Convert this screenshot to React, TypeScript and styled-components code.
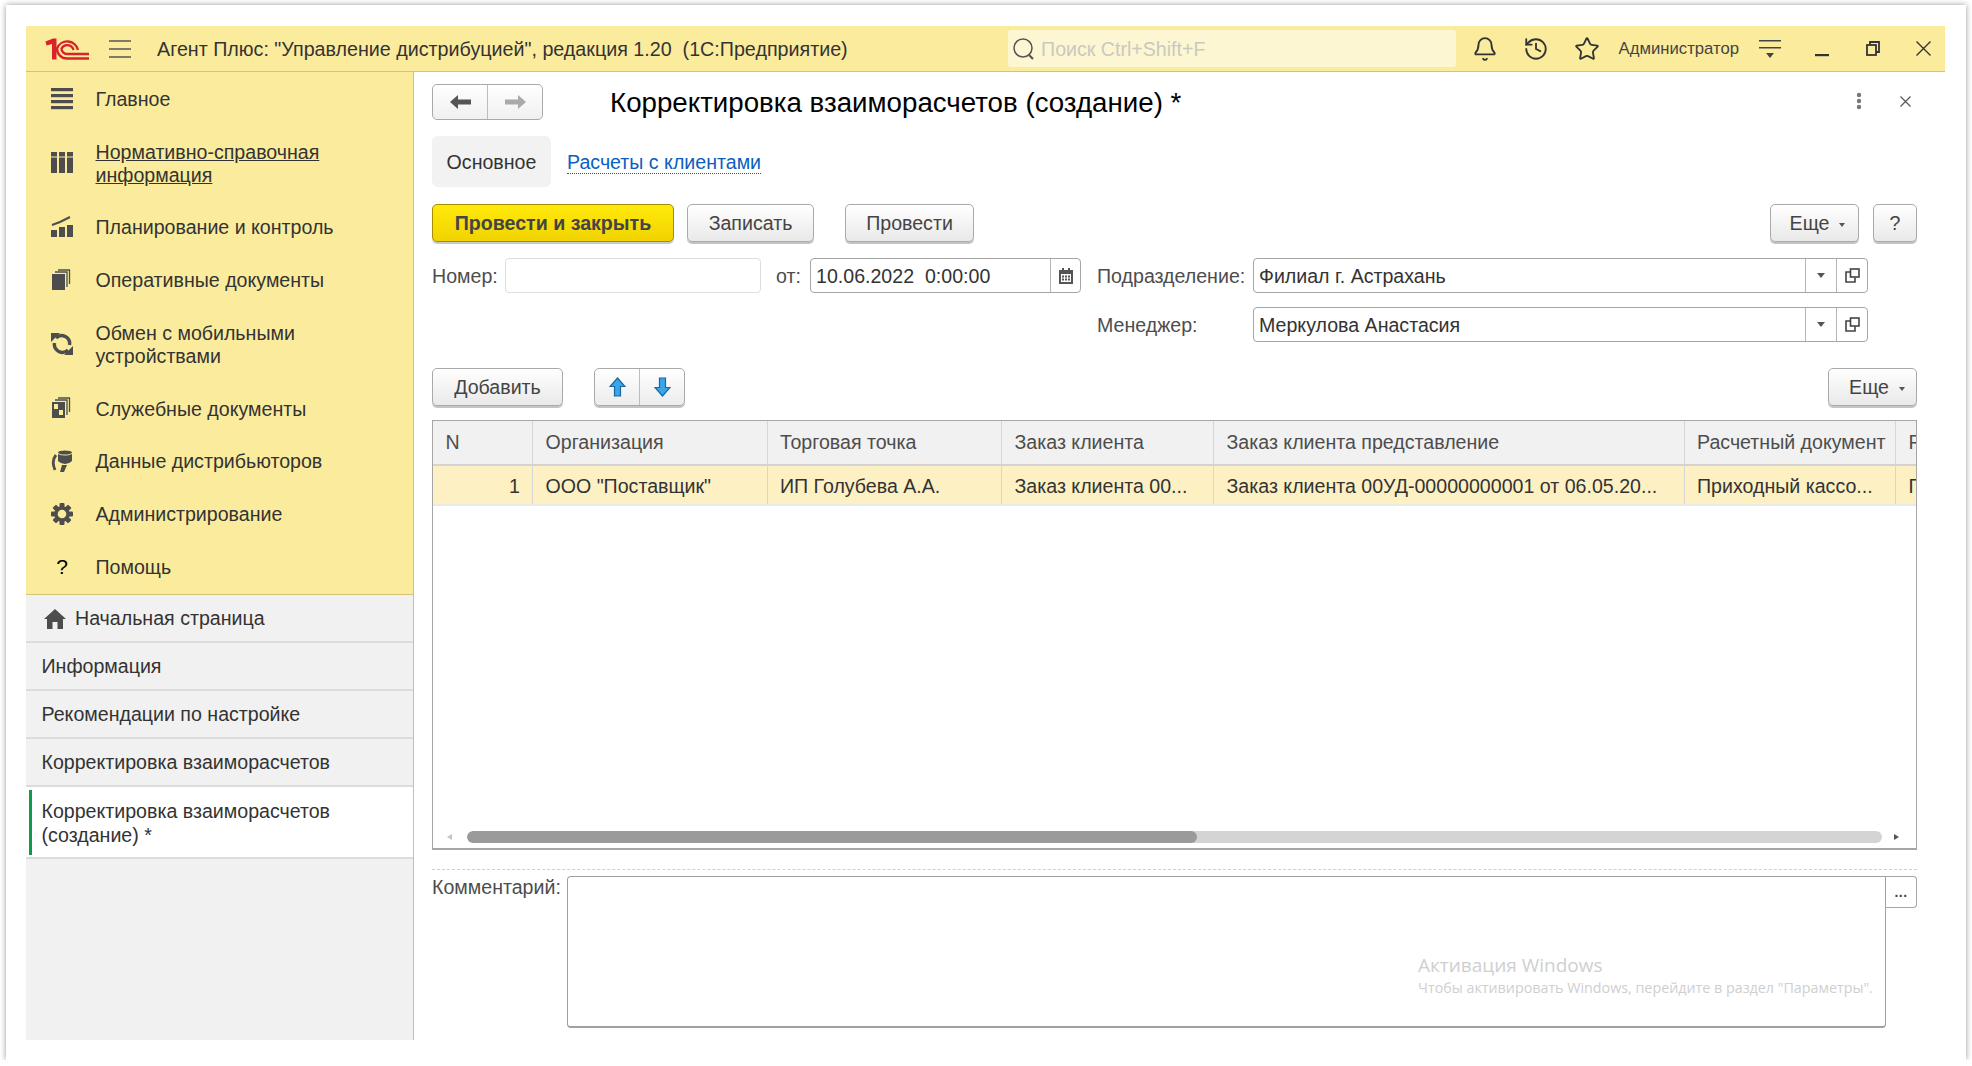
import React from 'react'
import styled, { createGlobalStyle } from 'styled-components'
import { Bell, History, Star } from 'lucide-react'

const GlobalStyle = createGlobalStyle`
  html, body {
    margin: 0;
    padding: 0;
    background: #fff;
    font-family: "Liberation Sans", Arial, sans-serif;
    font-size: 19.6px;
    color: #333;
  }
  * { box-sizing: border-box; }
`

const Frame = styled.div`
  width: 1960px;
  height: 1055px;
  margin: 5px 0 0 6px;
  padding: 21px 21px 20px 20px;
  background: #fff;
  box-shadow: 0 0 6px rgba(0, 0, 0, 0.4);
`

const Screen = styled.div`
  position: relative;
  display: flex;
  flex-direction: column;
  width: 1919px;
  height: 1014px;
`

const TopBar = styled.header`
  display: flex;
  align-items: center;
  flex: 0 0 46px;
  padding: 0 14px 0 19px;
  background: #fbec9d;
  border-bottom: 1px solid #d4c275;
`

const Logo = styled.svg`
  width: 44px;
  height: 22px;
  flex: none;
`

const MenuGlyph = styled.svg`
  width: 22px;
  height: 18px;
  margin-left: 20px;
  flex: none;
`

const AppTitle = styled.div`
  margin-left: 26px;
  padding-top: 1px;
  font-size: 19.7px;
  white-space: pre;
  color: #333;
`

const Search = styled.div`
  display: flex;
  align-items: center;
  width: 448px;
  height: 37px;
  margin-left: auto;
  padding: 1px 0 0 4px;
  background: #fdf6d2;
  border-radius: 3px;
  color: #c9c9c0;
`

const SearchIcon = styled.svg`
  width: 24px;
  height: 24px;
  margin-right: 5px;
  flex: none;
`

const TopIcon = styled.span<{ $ml: number }>`
  display: flex;
  margin-left: ${(p) => p.$ml}px;
  color: #333;
`

const UserName = styled.div`
  margin-left: 18.5px;
  font-size: 16.7px;
  color: #444;
`

const Body = styled.div`
  display: flex;
  flex: 1;
  min-height: 0;
`

const Side = styled.aside`
  display: flex;
  flex-direction: column;
  flex: 0 0 388px;
  background: #f1f1f1;
  border-right: 1px solid #d4c275;
`

const SideMenu = styled.nav`
  background: #fbec9d;
  border-bottom: 1px solid #d4c275;
  height: 523px;
`

const MenuItem = styled.div`
  display: flex;
  align-items: center;
  padding: 15px 12px 14px 25px;
  line-height: 22.8px;
  color: #333;
`

const MenuIcon = styled.span`
  display: flex;
  justify-content: center;
  flex: 0 0 22px;
  margin-right: 22.5px;
`

const MenuText = styled.span<{ $link?: boolean }>`
  padding-top: 1px;
  text-decoration: ${(p) => (p.$link ? 'underline' : 'none')};
`

const HelpMark = styled.span`
  font-size: 21px;
  line-height: 22px;
  color: #000;
`

const OpenItem = styled.div`
  display: flex;
  align-items: center;
  height: 48px;
  padding: 1px 0 0 15.5px;
  border-bottom: 2px solid #dcdcdc;
  color: #333;
`

const HomeIcon = styled.svg`
  width: 22px;
  height: 20px;
  margin-left: 2px;
  margin-right: 9.5px;
`

const ActiveItem = styled.div`
  height: 72px;
  padding: 3px 0 3px 3px;
  background: #fff;
  border-bottom: 2px solid #dcdcdc;
`

const ActiveInner = styled.div`
  height: 65px;
  padding-top: 8.5px;
  padding-left: 9.5px;
  border-left: 3px solid #0f9a4c;
  line-height: 24px;
  color: #333;
`

const Main = styled.main`
  flex: 1;
  min-width: 0;
  padding: 12px 28px 0 18px;
  background: #fff;
`

const TitleRow = styled.div`
  display: flex;
  align-items: center;
  height: 36px;
`

const BtnGroup = styled.div<{ $w: number; $ml?: number }>`
  display: flex;
  width: ${(p) => p.$w}px;
  height: 38px;
  margin-left: ${(p) => p.$ml ?? 0}px;
  background: linear-gradient(#fff, #ececec);
  border: 1px solid #a9a9a9;
  border-radius: 5px;
  box-shadow: 0 2px 0 #c4c4c4;
  flex: none;
`

const NavGroup = styled(BtnGroup)`
  height: 36px;
  box-shadow: none;
  background: linear-gradient(#fff, #f0f0f0);
`

const GroupCell = styled.span`
  display: flex;
  align-items: center;
  justify-content: center;
  flex: 1;
  & + & { border-left: 1px solid #bdbdbd; }
`

const DocTitle = styled.h1`
  margin: 0 0 0 67px;
  padding-top: 1px;
  font-size: 27.7px;
  font-weight: 400;
  color: #000;
  white-space: nowrap;
`

const TitleActions = styled.div`
  display: flex;
  align-items: center;
  margin: 0 6px 2px auto;
  gap: 38px;
`

const Tabs = styled.div`
  display: flex;
  align-items: center;
  margin-top: 16px;
  height: 51px;
`

const TabActive = styled.div`
  display: flex;
  align-items: center;
  justify-content: center;
  width: 119px;
  height: 51px;
  padding-top: 1px;
  background: #f2f2f2;
  border-radius: 6px;
  color: #333;
`

const TabLink = styled.a`
  margin: 2px 0 0 16px;
  color: #0b5ec2;
  border-bottom: 1px dotted #0b5ec2;
  line-height: 21px;
`

const CommandBar = styled.div<{ $top: number }>`
  display: flex;
  align-items: flex-start;
  height: 40px;
  margin-top: ${(p) => p.$top}px;
`

const Button = styled.button<{ $w: number; $ml?: number; $pl?: number }>`
  display: flex;
  align-items: center;
  justify-content: center;
  width: ${(p) => p.$w}px;
  height: 38px;
  margin: 0 0 0 ${(p) => p.$ml ?? 0}px;
  padding: 0 0 0 ${(p) => p.$pl ?? 0}px;
  font: inherit;
  color: #444;
  background: linear-gradient(#fff, #e9e9e9);
  border: 1px solid #a9a9a9;
  border-radius: 5px;
  box-shadow: 0 2px 0 #c4c4c4;
  flex: none;
`

const PrimaryButton = styled(Button)`
  font-weight: 700;
  color: #444;
  background: linear-gradient(#ffe90a, #f0d300);
  border-color: #a58c00;
  box-shadow: 0 2px 0 #c9c9c9;
`

const MoreCaret = styled.span`
  width: 0;
  height: 0;
  margin-left: 10px;
  margin-top: 3px;
  border-left: 3.5px solid transparent;
  border-right: 3.5px solid transparent;
  border-top: 4px solid #555;
`

const PushRight = styled.div`
  margin-left: auto;
  display: flex;
`

const FormGrid = styled.div`
  display: grid;
  grid-template-columns: 73px 256px 49px 271px 172px 615px;
  grid-auto-rows: 35px;
  row-gap: 14px;
  margin-top: 14px;
`

const Label = styled.label<{ $col?: number; $pl?: number }>`
  display: flex;
  align-items: center;
  padding: 1px 0 0 ${(p) => p.$pl ?? 0}px;
  grid-column: ${(p) => p.$col ?? 'auto'};
  color: #4d4d4d;
`

const Field = styled.div<{ $faint?: boolean }>`
  display: flex;
  align-items: stretch;
  height: 35px;
  background: #fff;
  border: 1px solid ${(p) => (p.$faint ? '#dedede' : '#a6a6a6')};
  border-radius: 4px;
`

const FieldText = styled.span`
  display: flex;
  align-items: center;
  flex: 1;
  padding: 1px 0 0 5px;
  white-space: pre;
  color: #333;
`

const FieldBtn = styled.span<{ $w?: number }>`
  display: flex;
  align-items: center;
  justify-content: center;
  flex: 0 0 ${(p) => p.$w ?? 31}px;
  border-left: 1px solid #b5b5b5;
`

const Caret = styled.span`
  width: 0;
  height: 0;
  border-left: 4px solid transparent;
  border-right: 4px solid transparent;
  border-top: 5px solid #555;
`

const Grid = styled.div`
  display: flex;
  flex-direction: column;
  height: 430px;
  margin-top: 12px;
  background: #fff;
  border: 1px solid #a6a6a6;
  border-bottom-width: 2px;
  overflow: hidden;
`

const GridRow = styled.div<{ $head?: boolean }>`
  display: grid;
  grid-template-columns: 100px 234.5px 234.5px 212px 470.5px 211.5px 40px;
  height: ${(p) => (p.$head ? 45 : 40)}px;
  background: ${(p) => (p.$head ? '#f1f1f1' : '#fdf1c3')};
  border-bottom: 2px solid ${(p) => (p.$head ? '#d3d3d3' : '#e9e9e9')};
`

const Cell = styled.div<{ $right?: boolean }>`
  display: flex;
  align-items: center;
  justify-content: ${(p) => (p.$right ? 'flex-end' : 'flex-start')};
  padding: 2px 12px 0 12.5px;
  border-right: 1px solid #d6d6d6;
  white-space: nowrap;
  overflow: hidden;
  color: #333;
`

const HeadCell = styled(Cell)`
  padding-top: 0;
  color: #4d4d4d;
`

const GridSpace = styled.div`
  flex: 1;
`

const ScrollRow = styled.div`
  display: flex;
  align-items: center;
  height: 12px;
  margin-bottom: 5px;
  padding-left: 14px;
`

const ScrollTrack = styled.div`
  flex: 0 0 1415px;
  height: 12px;
  margin-left: 15px;
  margin-right: 12px;
  background: #d4d4d4;
  border-radius: 6px;
  overflow: hidden;
`

const ScrollThumb = styled.div`
  height: 100%;
  background: #9a9a9a;
  border-radius: 6px;
`

const ArrowLeft = styled.span`
  width: 0;
  height: 0;
  border-top: 3.5px solid transparent;
  border-bottom: 3.5px solid transparent;
  border-right: 5px solid #c4c4c4;
`

const ArrowRight = styled.span`
  width: 0;
  height: 0;
  border-top: 3.5px solid transparent;
  border-bottom: 3.5px solid transparent;
  border-left: 5px solid #555;
`

const Dashed = styled.div`
  margin-top: 19px;
  border-top: 1px dashed #d0d0d0;
`

const CommentRow = styled.div`
  display: flex;
  margin-top: 6px;
`

const CommentLabel = styled.label`
  flex: 0 0 135px;
  line-height: 22px;
  color: #4d4d4d;
`

const CommentBox = styled.div`
  flex: 1;
  height: 152px;
  background: #fff;
  border: 1px solid #a0a0a0;
  border-bottom-width: 2px;
  border-radius: 4px 0 4px 4px;
`

const CommentBtn = styled.div`
  display: flex;
  align-items: center;
  justify-content: center;
  flex: 0 0 31px;
  height: 32px;
  border: 1px solid #a6a6a6;
  border-left: 0;
  border-radius: 0 4px 4px 0;
  font-size: 14px;
  font-weight: 700;
  letter-spacing: 0.5px;
  color: #444;
`

const Watermark = styled.div`
  position: absolute;
  left: 1392px;
  top: 926px;
  font-family: "Open Sans", "Noto Sans", sans-serif;
  color: #cfcfcf;
  pointer-events: none;
`

const WatermarkTitle = styled.div`
  font-size: 19px;
  line-height: 27px;
`

const WatermarkText = styled.div`
  font-size: 14.3px;
  line-height: 18px;
  white-space: nowrap;
`

const DARK = '#4d4d4d'

const IconSvg = ({ children }: { children: React.ReactNode }) => (
  <svg width="22" height="22" viewBox="0 0 22 22" fill={DARK}>
    {children}
  </svg>
)

const menuIcons: Record<string, React.ReactNode> = {
  main: (
    <IconSvg>
      <rect x="0" y="0" width="22" height="3.2" />
      <rect x="0" y="6" width="22" height="3.2" />
      <rect x="0" y="12" width="22" height="3.2" />
      <rect x="0" y="18" width="22" height="3.2" />
    </IconSvg>
  ),
  ref: (
    <IconSvg>
      <rect x="0" y="0" width="6" height="21" />
      <rect x="8" y="0" width="6" height="21" />
      <rect x="16" y="0" width="6" height="21" />
      <rect x="0" y="4.5" width="22" height="1" fill="#fbec9d" />
    </IconSvg>
  ),
  plan: (
    <IconSvg>
      <rect x="0" y="14" width="6" height="7" />
      <rect x="8" y="11" width="6" height="10" />
      <rect x="16" y="9" width="6" height="12" />
      <path d="M1 9 L9 6 L19 1" fill="none" stroke={DARK} strokeWidth="2" />
    </IconSvg>
  ),
  docs: (
    <IconSvg>
      <rect x="1" y="5" width="13" height="16" />
      <path d="M4 3 H16 V18 M7 1 H18.500 V15" fill="none" stroke={DARK} strokeWidth="1.300" />
    </IconSvg>
  ),
  sync: (
    <IconSvg>
      <path d="M5 5 A8 8 0 0 1 18.500 12" fill="none" stroke={DARK} strokeWidth="3.400" />
      <path d="M17 17 A8 8 0 0 1 3.500 10" fill="none" stroke={DARK} strokeWidth="3.400" />
      <path d="M0 0 H9 L0 9 Z" />
      <path d="M22 22 H13 L22 13 Z" />
    </IconSvg>
  ),
  service: (
    <IconSvg>
      <rect x="1" y="5" width="13" height="16" />
      <rect x="3" y="7" width="4" height="5" fill="#fbec9d" />
      <rect x="8" y="13" width="4" height="5" fill="#fbec9d" />
      <path d="M4 3 H16 V18 M7 1 H18.500 V15" fill="none" stroke={DARK} strokeWidth="1.300" />
    </IconSvg>
  ),
  dist: (
    <IconSvg>
      <ellipse cx="14" cy="2.500" rx="7" ry="2" />
      <path d="M7 4 Q14 7 21 4 V11 Q18 14 14 14 Q10 14 7 11 Z" />
      <path d="M5 5 Q0 11 4 20" fill="none" stroke={DARK} strokeWidth="2.800" />
      <path d="M9 22 L11 15 H16 L13 22 Z" />
    </IconSvg>
  ),
  gear: (
    <IconSvg>
      {[0, 45, 90, 135, 180, 225, 270, 315].map((a) => (
        <rect key={a} x="8.500" y="0" width="5" height="5" rx="1" transform={`rotate(${a} 11 11)`} />
      ))}
      <circle cx="11" cy="11" r="6" fill="none" stroke={DARK} strokeWidth="3.400" />
    </IconSvg>
  ),
}

const menu = [
  { key: 'main', text: 'Главное' },
  { key: 'ref', text: 'Нормативно-справочная информация', link: true },
  { key: 'plan', text: 'Планирование и контроль' },
  { key: 'docs', text: 'Оперативные документы' },
  { key: 'sync', text: 'Обмен с мобильными устройствами' },
  { key: 'service', text: 'Служебные документы' },
  { key: 'dist', text: 'Данные дистрибьюторов' },
  { key: 'gear', text: 'Администрирование' },
]

const OpenIcon = () => (
  <svg width="15" height="15" viewBox="0 0 15 15" fill="none" stroke="#444" strokeWidth="1.600">
    <rect x="5.500" y="1" width="8.500" height="8" />
    <path d="M5 4 H1 V14 H10 V9.500" />
  </svg>
)

const UpArrow = ({ down }: { down?: boolean }) => (
  <svg width="17" height="20" viewBox="0 0 17 20" style={down ? { transform: 'rotate(180deg)' } : undefined}>
    <path d="M8.500 1 L16 9.500 H11.500 V19 H5.500 V9.500 H1 Z" fill="#3aa5ea" stroke="#17689f" strokeWidth="1.200" />
  </svg>
)

const NavArrow = ({ color, flip }: { color: string; flip?: boolean }) => (
  <svg width="21" height="14" viewBox="0 0 21 14" style={flip ? { transform: 'scaleX(-1)' } : undefined}>
    <path d="M0 7 L8 0 V4.500 H21 V9.500 H8 V14 Z" fill={color} />
  </svg>
)

export default function App() {
  return (
    <>
      <GlobalStyle />
      <Frame>
        <Screen>
          <TopBar>
            <Logo viewBox="0 0 44 22">
              <path d="M0.500 3.500 L8 0.500 H11.500 V21.500 H7 V6 L1.500 7.500 Z" fill="#d8232a" />
              <path d="M33 12 A11 11 0 0 0 12 10.500 A10 10 0 0 0 22 20.500 H44" fill="none" stroke="#d8232a" strokeWidth="2.400" />
              <path d="M28.500 12 A6.500 6.500 0 0 0 16.500 10.500 A5.500 5.500 0 0 0 22 16 H44" fill="none" stroke="#d8232a" strokeWidth="2.400" />
            </Logo>
            <MenuGlyph viewBox="0 0 22 18" stroke="#555" strokeWidth="1.500">
              <path d="M0 1 H22 M0 9 H22 M0 17 H22" />
            </MenuGlyph>
            <AppTitle>Агент Плюс: "Управление дистрибуцией", редакция 1.20  (1С:Предприятие)</AppTitle>
            <Search>
              <SearchIcon viewBox="0 0 24 24" fill="none" stroke="#555" strokeWidth="1.500">
                <circle cx="11" cy="11" r="9" />
                <path d="M17 18 L21 22" strokeWidth="2.200" />
              </SearchIcon>
              Поиск Ctrl+Shift+F
            </Search>
            <TopIcon $ml={16}>
              <Bell size={26} strokeWidth={1.700} />
            </TopIcon>
            <TopIcon $ml={25}>
              <History size={26} strokeWidth={1.700} />
            </TopIcon>
            <TopIcon $ml={25}>
              <Star size={26} strokeWidth={1.700} />
            </TopIcon>
            <UserName>Администратор</UserName>
            <TopIcon $ml={20}>
              <svg width="22" height="20" viewBox="0 0 22 20" fill="#444">
                <rect x="0" y="1" width="22" height="1.500" />
                <rect x="0" y="8" width="22" height="1.500" />
                <path d="M7 14 H15 L11 19 Z" />
              </svg>
            </TopIcon>
            <TopIcon $ml={34}>
              <svg width="14" height="16" viewBox="0 0 14 16" fill="#333">
                <rect x="0" y="13" width="14" height="2.200" />
              </svg>
            </TopIcon>
            <TopIcon $ml={37}>
              <svg width="14" height="15" viewBox="0 0 14 15" fill="none" stroke="#333" strokeWidth="1.800">
                <rect x="1" y="4" width="9" height="10" />
                <path d="M4 3.500 V1 H13 V11 H10" />
              </svg>
            </TopIcon>
            <TopIcon $ml={36}>
              <svg width="15" height="15" viewBox="0 0 15 15" stroke="#333" strokeWidth="1.400">
                <path d="M0.500 0.500 L14.500 14.500 M14.500 0.500 L0.500 14.500" />
              </svg>
            </TopIcon>
          </TopBar>
          <Body>
            <Side>
              <SideMenu>
                {menu.map((m) => (
                  <MenuItem key={m.key}>
                    <MenuIcon>{menuIcons[m.key]}</MenuIcon>
                    <MenuText $link={m.link}>{m.text}</MenuText>
                  </MenuItem>
                ))}
                <MenuItem>
                  <MenuIcon>
                    <HelpMark>?</HelpMark>
                  </MenuIcon>
                  <MenuText>Помощь</MenuText>
                </MenuItem>
              </SideMenu>
              <OpenItem>
                <HomeIcon viewBox="0 0 22 20" fill={DARK}>
                  <path d="M11 0 L22 10 H19 V20 H13.500 V13 H8.500 V20 H3 V10 H0 Z" />
                </HomeIcon>
                Начальная страница
              </OpenItem>
              <OpenItem>Информация</OpenItem>
              <OpenItem>Рекомендации по настройке</OpenItem>
              <OpenItem>Корректировка взаиморасчетов</OpenItem>
              <ActiveItem>
                <ActiveInner>Корректировка взаиморасчетов (создание) *</ActiveInner>
              </ActiveItem>
            </Side>
            <Main>
              <TitleRow>
                <NavGroup $w={111}>
                  <GroupCell>
                    <NavArrow color="#555" />
                  </GroupCell>
                  <GroupCell>
                    <NavArrow color="#aaa" flip />
                  </GroupCell>
                </NavGroup>
                <DocTitle>Корректировка взаиморасчетов (создание) *</DocTitle>
                <TitleActions>
                  <svg width="6" height="18" viewBox="0 0 6 18" fill="#777">
                    <circle cx="3" cy="3" r="2.200" />
                    <circle cx="3" cy="9" r="2.200" />
                    <circle cx="3" cy="15" r="2.200" />
                  </svg>
                  <svg width="11" height="11" viewBox="0 0 11 11" stroke="#555" strokeWidth="1.200">
                    <path d="M0.500 0.500 L10.500 10.500 M10.500 0.500 L0.500 10.500" />
                  </svg>
                </TitleActions>
              </TitleRow>
              <Tabs>
                <TabActive>Основное</TabActive>
                <TabLink>Расчеты с клиентами</TabLink>
              </Tabs>
              <CommandBar $top={17}>
                <PrimaryButton $w={242}>Провести и закрыть</PrimaryButton>
                <Button $w={127} $ml={13}>Записать</Button>
                <Button $w={129} $ml={31}>Провести</Button>
                <PushRight>
                  <Button $w={89} $pl={6}>
                    Еще
                    <MoreCaret />
                  </Button>
                  <Button $w={44} $ml={14}>?</Button>
                </PushRight>
              </CommandBar>
              <FormGrid>
                <Label>Номер:</Label>
                <Field $faint />
                <Label $pl={15}>от:</Label>
                <Field>
                  <FieldText>10.06.2022  0:00:00</FieldText>
                  <FieldBtn $w={30}>
                    <svg width="14" height="16" viewBox="0 0 14 16" fill="#555">
                      <path d="M0 2 H3 V0 H5 V2 H9 V0 H11 V2 H14 V16 H0 Z M2 6 V14 H12 V6 Z" />
                      <path d="M3 7.500 H5 V9.500 H3 Z M6 7.500 H8 V9.500 H6 Z M9 7.500 H11 V9.500 H9 Z M3 10.500 H5 V12.500 H3 Z M6 10.500 H8 V12.500 H6 Z M9 10.500 H11 V12.500 H9 Z" />
                    </svg>
                  </FieldBtn>
                </Field>
                <Label $pl={16}>Подразделение:</Label>
                <Field>
                  <FieldText>Филиал г. Астрахань</FieldText>
                  <FieldBtn>
                    <Caret />
                  </FieldBtn>
                  <FieldBtn>
                    <OpenIcon />
                  </FieldBtn>
                </Field>
                <Label $col={5} $pl={16}>Менеджер:</Label>
                <Field>
                  <FieldText>Меркулова Анастасия</FieldText>
                  <FieldBtn>
                    <Caret />
                  </FieldBtn>
                  <FieldBtn>
                    <OpenIcon />
                  </FieldBtn>
                </Field>
              </FormGrid>
              <CommandBar $top={26}>
                <Button $w={131}>Добавить</Button>
                <BtnGroup $w={91} $ml={31}>
                  <GroupCell>
                    <UpArrow />
                  </GroupCell>
                  <GroupCell>
                    <UpArrow down />
                  </GroupCell>
                </BtnGroup>
                <PushRight>
                  <Button $w={89} $pl={9}>
                    Еще
                    <MoreCaret />
                  </Button>
                </PushRight>
              </CommandBar>
              <Grid>
                <GridRow $head>
                  <HeadCell>N</HeadCell>
                  <HeadCell>Организация</HeadCell>
                  <HeadCell>Торговая точка</HeadCell>
                  <HeadCell>Заказ клиента</HeadCell>
                  <HeadCell>Заказ клиента представление</HeadCell>
                  <HeadCell>Расчетный документ</HeadCell>
                  <HeadCell>Р</HeadCell>
                </GridRow>
                <GridRow>
                  <Cell $right>1</Cell>
                  <Cell>ООО "Поставщик"</Cell>
                  <Cell>ИП Голубева А.А.</Cell>
                  <Cell>Заказ клиента 00...</Cell>
                  <Cell>Заказ клиента 00УД-00000000001 от 06.05.20...</Cell>
                  <Cell>Приходный кассо...</Cell>
                  <Cell>П</Cell>
                </GridRow>
                <GridSpace />
                <ScrollRow>
                  <ArrowLeft />
                  <ScrollTrack>
                    <ScrollThumb style={{ width: `${(730 / 1415) * 100}%` }} />
                  </ScrollTrack>
                  <ArrowRight />
                </ScrollRow>
              </Grid>
              <Dashed />
              <CommentRow>
                <CommentLabel>Комментарий:</CommentLabel>
                <CommentBox />
                <CommentBtn>...</CommentBtn>
              </CommentRow>
            </Main>
          </Body>
          <Watermark>
            <WatermarkTitle>Активация Windows</WatermarkTitle>
            <WatermarkText>Чтобы активировать Windows, перейдите в раздел "Параметры".</WatermarkText>
          </Watermark>
        </Screen>
      </Frame>
    </>
  )
}
